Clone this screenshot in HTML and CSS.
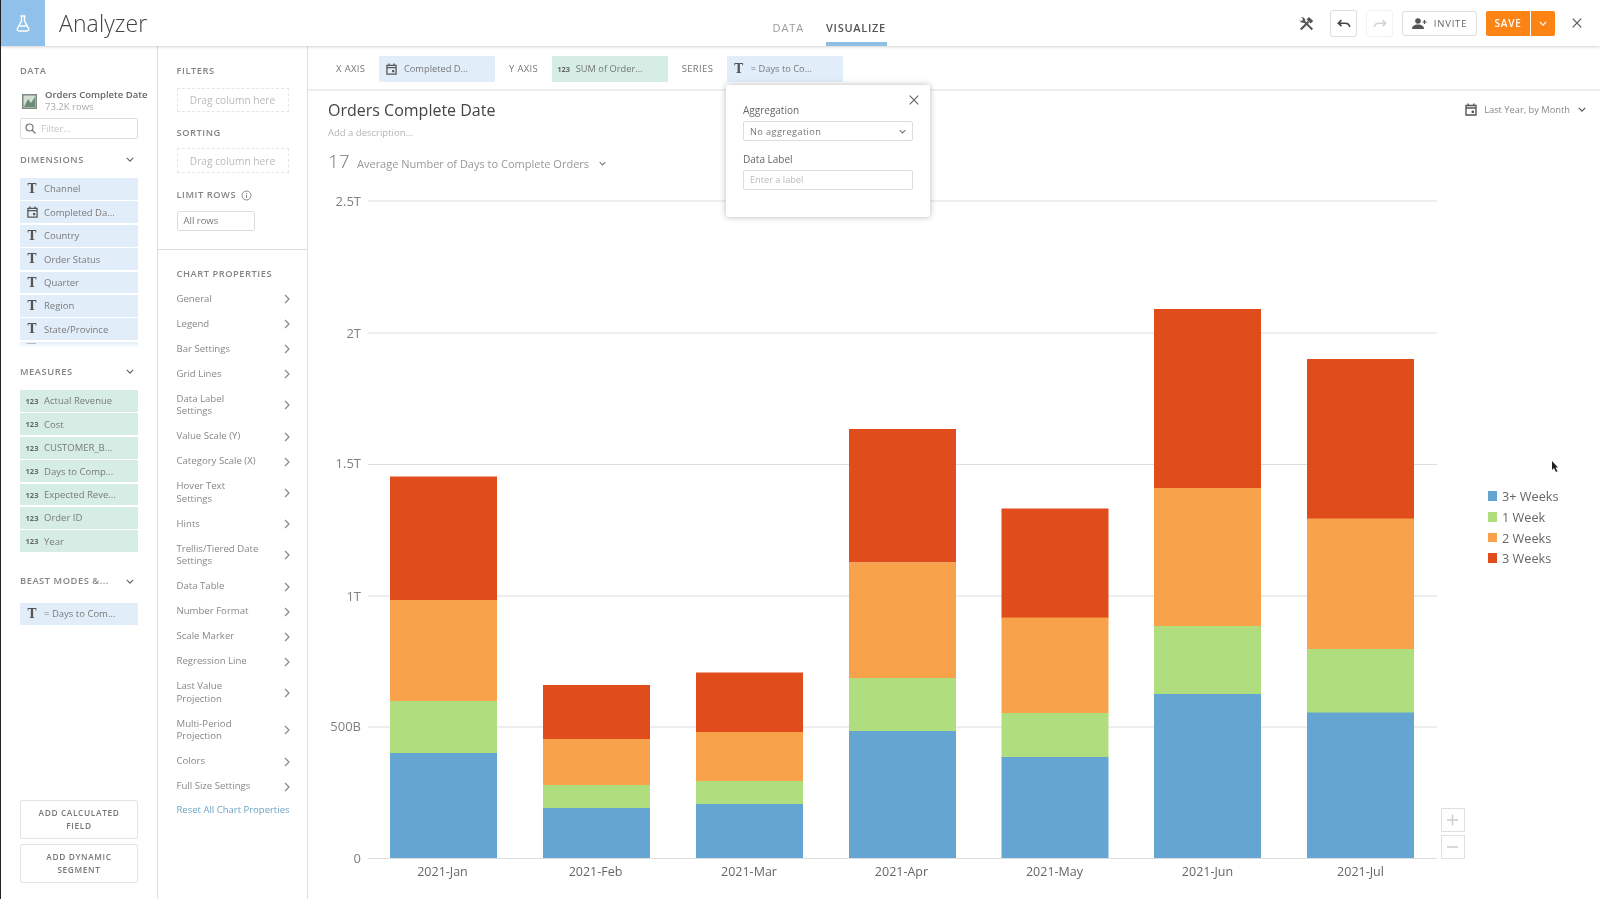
FILE: index.html
```html
<!DOCTYPE html>
<html lang="en">
<head>
<meta charset="utf-8">
<title>Analyzer</title>
<link rel="stylesheet" href="styles.css">
</head>
<body>
<svg class="defs" width="0" height="0" aria-hidden="true">
  <symbol id="cal" viewBox="0 0 12 13"><path d="M1 2.500h10v9.500H1zM1 5h10M3.200.5v2.500M8.800.5v2.500" fill="none" stroke="currentColor" stroke-width="1.400"/><rect x="6.600" y="7.600" width="2.400" height="2.400" fill="currentColor"/></symbol>
  <symbol id="chev" viewBox="0 0 10 6"><path d="M1 1l4 4 4-4" fill="none" stroke="currentColor" stroke-width="1.500"/></symbol>
  <symbol id="right" viewBox="0 0 6 10"><path d="M1 1l4 4-4 4" fill="none" stroke="currentColor" stroke-width="1.200"/></symbol>
  <symbol id="close" viewBox="0 0 10 10"><path d="M.7.7l8.600 8.600M9.300.7L.7 9.300" fill="none" stroke="currentColor" stroke-width="1.200"/></symbol>
</svg>
<div class="app">
  <header class="topbar">
    <div class="logo">
      <svg width="14" height="17" viewBox="0 0 14 17"><path d="M4.500 1h5M5.500 1v5L1.400 13.500c-.6 1.200.2 2.500 1.500 2.500h8.200c1.300 0 2.100-1.300 1.500-2.500L8.500 6V1M3.500 11h7" fill="none" stroke="#fff" stroke-width="1.500"/></svg>
    </div>
    <h1 class="app-title">Analyzer</h1>
    <nav class="tabs">
      <span class="tab">DATA</span>
      <span class="tab tab-active">VISUALIZE</span>
    </nav>
    <div class="actions">
      <svg class="tools" width="15" height="15" viewBox="0 0 15 15"><path d="M1.800 13.500L9.500 5.800" fill="none" stroke="#555" stroke-width="2.200"/><path d="M7.500 3.500L10 1l4.200 4-2.500 2.500z" fill="#555"/><path d="M13.300 13.500L5.200 5.400" fill="none" stroke="#555" stroke-width="2"/><path d="M6 6C7 3.500 5 .5 2.200 1.300L4 3.200 3.200 4.800 1.400 5 .6 3C.2 5.800 3.200 7.500 5.500 6.500z" fill="#555"/></svg>
      <button class="icon-btn"><svg width="14" height="9" viewBox="0 0 14 9"><path d="M4.500 1L1.300 4.200l3.200 3M1.500 4.200H8c2.600 0 4.300 1.200 4.800 3.800" fill="none" stroke="#444" stroke-width="1.600"/></svg></button>
      <button class="icon-btn icon-btn-off"><svg width="14" height="9" viewBox="0 0 14 9"><path d="M9.500 1l3.200 3.200-3.200 3M12.500 4.200H6C3.400 4.200 1.700 5.400 1.200 8" fill="none" stroke="#d4d4d4" stroke-width="1.600"/></svg></button>
      <button class="invite"><svg width="15" height="11" viewBox="0 0 15 11"><circle cx="6" cy="3" r="2.800" fill="#555"/><path d="M0 11c0-3 2.500-4.500 6-4.500s6 1.500 6 4.500z" fill="#555"/><path d="M12.500 2v4M10.500 4h4" stroke="#555" stroke-width="1.200"/></svg>INVITE</button>
      <div class="save-group">
        <button class="save">SAVE</button>
        <button class="save-more"><svg width="8" height="5"><use href="#chev"/></svg></button>
      </div>
      <svg class="close-top" width="10" height="10"><use href="#close"/></svg>
    </div>
  </header>

  <div class="workspace">
    <aside class="panel data-panel">
      <div class="label nudge">DATA</div>
      <div class="source">
        <svg class="source-icon" width="15" height="15" viewBox="0 0 15 15"><rect width="15" height="15" fill="#7c8a82"/><rect x="1.500" y="1.500" width="12" height="12" fill="#cfe0d2"/><path d="M2 13l4-8 3 4 4-6v10z" fill="#6d8c78"/></svg>
        <div class="source-text">
          <div class="source-name">Orders Complete Date</div>
          <div class="source-rows">73.2K rows</div>
        </div>
      </div>
      <div class="filter-input">
        <svg width="11" height="11" viewBox="0 0 11 11"><circle cx="4.500" cy="4.500" r="3.500" fill="none" stroke="#777" stroke-width="1.200"/><path d="M7 7l3.500 3.500" stroke="#777" stroke-width="1.300"/></svg>
        <span>Filter...</span>
      </div>

      <div class="section-head dims"><span class="label nudge">DIMENSIONS</span><svg width="8" height="5"><use href="#chev"/></svg></div>
      <div class="chips chips-clipped">
        <div class="chip blue"><b class="t">T</b>Channel</div>
        <div class="chip blue"><svg class="cal" width="11" height="12"><use href="#cal"/></svg>Completed Da...</div>
        <div class="chip blue"><b class="t">T</b>Country</div>
        <div class="chip blue"><b class="t">T</b>Order Status</div>
        <div class="chip blue"><b class="t">T</b>Quarter</div>
        <div class="chip blue"><b class="t">T</b>Region</div>
        <div class="chip blue"><b class="t">T</b>State/Province</div>
        <div class="chip-peek"><span class="peek-mark"></span></div>
      </div>

      <div class="section-head measures"><span class="label nudge">MEASURES</span><svg width="8" height="5"><use href="#chev"/></svg></div>
      <div class="chips">
        <div class="chip green"><b class="n">123</b>Actual Revenue</div>
        <div class="chip green"><b class="n">123</b>Cost</div>
        <div class="chip green"><b class="n">123</b>CUSTOMER_B...</div>
        <div class="chip green"><b class="n">123</b>Days to Comp...</div>
        <div class="chip green"><b class="n">123</b>Expected Reve...</div>
        <div class="chip green"><b class="n">123</b>Order ID</div>
        <div class="chip green"><b class="n">123</b>Year</div>
      </div>

      <div class="section-head beast"><span class="label">BEAST MODES &amp;...</span><svg width="8" height="5"><use href="#chev"/></svg></div>
      <div class="chips">
        <div class="chip blue"><b class="t">T</b>= Days to Com...</div>
      </div>

      <div class="add-buttons">
        <button class="add">ADD CALCULATED FIELD</button>
        <button class="add">ADD DYNAMIC SEGMENT</button>
      </div>
    </aside>

    <aside class="panel props-panel">
      <div class="props-top">
        <div class="label nudge">FILTERS</div>
        <div class="drop drop-a">Drag column here</div>
        <div class="label sort-label">SORTING</div>
        <div class="drop drop-b">Drag column here</div>
        <div class="label limit-label nudge">LIMIT ROWS
          <svg width="11" height="11" viewBox="0 0 11 11"><circle cx="5.500" cy="5.500" r="4.500" fill="none" stroke="#888"/><path d="M5.500 5v3M5.500 3v1" stroke="#888"/></svg>
        </div>
        <div class="limit-input">All rows</div>
      </div>
      <div class="props-list">
        <div class="label">CHART PROPERTIES</div>
        <ul class="prop-items">
          <li>General<svg width="6" height="10"><use href="#right"/></svg></li>
          <li>Legend<svg width="6" height="10"><use href="#right"/></svg></li>
          <li>Bar Settings<svg width="6" height="10"><use href="#right"/></svg></li>
          <li>Grid Lines<svg width="6" height="10"><use href="#right"/></svg></li>
          <li class="two"><span>Data Label<br>Settings</span><svg width="6" height="10"><use href="#right"/></svg></li>
          <li>Value Scale (Y)<svg width="6" height="10"><use href="#right"/></svg></li>
          <li>Category Scale (X)<svg width="6" height="10"><use href="#right"/></svg></li>
          <li class="two"><span>Hover Text<br>Settings</span><svg width="6" height="10"><use href="#right"/></svg></li>
          <li>Hints<svg width="6" height="10"><use href="#right"/></svg></li>
          <li class="two"><span>Trellis/Tiered Date<br>Settings</span><svg width="6" height="10"><use href="#right"/></svg></li>
          <li>Data Table<svg width="6" height="10"><use href="#right"/></svg></li>
          <li>Number Format<svg width="6" height="10"><use href="#right"/></svg></li>
          <li>Scale Marker<svg width="6" height="10"><use href="#right"/></svg></li>
          <li>Regression Line<svg width="6" height="10"><use href="#right"/></svg></li>
          <li class="two"><span>Last Value<br>Projection</span><svg width="6" height="10"><use href="#right"/></svg></li>
          <li class="two"><span>Multi-Period<br>Projection</span><svg width="6" height="10"><use href="#right"/></svg></li>
          <li>Colors<svg width="6" height="10"><use href="#right"/></svg></li>
          <li>Full Size Settings<svg width="6" height="10"><use href="#right"/></svg></li>
        </ul>
        <div class="reset">Reset All Chart Properties</div>
      </div>
    </aside>

    <main class="main">
      <div class="axis-bar">
        <span class="axis-label x-label">X AXIS</span>
        <div class="axis-chip blue"><svg class="cal" width="11" height="12"><use href="#cal"/></svg>Completed D...</div>
        <span class="axis-label">Y AXIS</span>
        <div class="axis-chip green"><b class="n">123</b>SUM of Order...</div>
        <span class="axis-label">SERIES</span>
        <div class="axis-chip blue"><b class="t">T</b>= Days to Co...</div>
      </div>

      <div class="chart-head">
        <div class="chart-titles">
          <h2 class="chart-title">Orders Complete Date</h2>
          <div class="chart-desc">Add a description...</div>
          <div class="summary"><span class="summary-num">17</span><span class="summary-text">Average Number of Days to Complete Orders</span><svg width="7" height="5"><use href="#chev"/></svg></div>
        </div>
        <div class="date-range"><svg class="cal" width="12" height="13"><use href="#cal"/></svg>Last Year, by Month<svg class="date-chev" width="8" height="5"><use href="#chev"/></svg></div>
      </div>

      <svg class="chart" viewBox="308 185 1292 714" width="1292" height="714">
        <g class="grid">
          <line x1="368" x2="1437" y1="201" y2="201"/>
          <line x1="368" x2="1437" y1="333" y2="333"/>
          <line x1="368" x2="1437" y1="464.500" y2="464.500"/>
          <line x1="368" x2="1437" y1="596" y2="596"/>
          <line x1="368" x2="1437" y1="727" y2="727"/>
          <line x1="368" x2="1437" y1="858.500" y2="858.500"/>
        </g>
        <g class="y-ticks">
          <text x="361" y="205.500">2.5T</text>
          <text x="361" y="337.500">2T</text>
          <text x="361" y="468">1.5T</text>
          <text x="361" y="600.500">1T</text>
          <text x="361" y="731">500B</text>
          <text x="361" y="863">0</text>
        </g>
        <g>
          <rect class="s4" x="390" width="107" y="476.500" height="124"/><rect class="s3" x="390" width="107" y="600" height="101.500"/><rect class="s2" x="390" width="107" y="701" height="52.500"/><rect class="s1" x="390" width="107" y="753" height="105"/>
          <rect class="s4" x="543" width="107" y="685" height="54.500"/><rect class="s3" x="543" width="107" y="739" height="46.500"/><rect class="s2" x="543" width="107" y="785" height="23.500"/><rect class="s1" x="543" width="107" y="808" height="50"/>
          <rect class="s4" x="696" width="107" y="672.500" height="60"/><rect class="s3" x="696" width="107" y="732" height="49.500"/><rect class="s2" x="696" width="107" y="781" height="23.500"/><rect class="s1" x="696" width="107" y="804" height="54"/>
          <rect class="s4" x="849" width="107" y="429" height="133.500"/><rect class="s3" x="849" width="107" y="562.500" height="116"/><rect class="s2" x="849" width="107" y="678" height="53.500"/><rect class="s1" x="849" width="107" y="731" height="127"/>
          <rect class="s4" x="1001.500" width="107" y="508.500" height="109.500"/><rect class="s3" x="1001.500" width="107" y="617.500" height="96"/><rect class="s2" x="1001.500" width="107" y="713" height="44.500"/><rect class="s1" x="1001.500" width="107" y="757" height="101"/>
          <rect class="s4" x="1154" width="107" y="309" height="179.500"/><rect class="s3" x="1154" width="107" y="488" height="138.500"/><rect class="s2" x="1154" width="107" y="626" height="68.500"/><rect class="s1" x="1154" width="107" y="694" height="164"/>
          <rect class="s4" x="1307" width="107" y="359" height="160"/><rect class="s3" x="1307" width="107" y="518.500" height="131"/><rect class="s2" x="1307" width="107" y="649" height="64"/><rect class="s1" x="1307" width="107" y="712.500" height="145.500"/>
        </g>
        <g class="x-ticks">
          <text x="442.500" y="876">2021-Jan</text>
          <text x="595.500" y="876">2021-Feb</text>
          <text x="749" y="876">2021-Mar</text>
          <text x="901.500" y="876">2021-Apr</text>
          <text x="1054.500" y="876">2021-May</text>
          <text x="1207.500" y="876">2021-Jun</text>
          <text x="1360.500" y="876">2021-Jul</text>
        </g>
        <g class="legend">
          <rect class="s1" x="1488" y="491" width="9" height="10"/><text x="1502" y="501">3+ Weeks</text>
          <rect class="s2" x="1488" y="512" width="9" height="10"/><text x="1502" y="522">1 Week</text>
          <rect class="s3" x="1488" y="533" width="9" height="9"/><text x="1502" y="542.500">2 Weeks</text>
          <rect class="s4" x="1488" y="553" width="9" height="10"/><text x="1502" y="563">3 Weeks</text>
        </g>
        <g class="zoom">
          <rect x="1441.500" y="808.500" width="23" height="23"/><path d="M1447 820h11M1452.500 814.500v11"/>
          <rect x="1441.500" y="835.500" width="23" height="23"/><path d="M1447 847h11"/>
        </g>
      </svg>

      <div class="popover">
        <svg class="popover-close" width="10" height="10"><use href="#close"/></svg>
        <div class="pop-label">Aggregation</div>
        <div class="pop-field pop-select">No aggregation<svg width="7" height="5"><use href="#chev"/></svg></div>
        <div class="pop-label pop-label-2">Data Label</div>
        <div class="pop-field pop-input">Enter a label</div>
      </div>
    </main>
  </div>
  <svg class="cursor" width="8" height="12" viewBox="0 0 8 12"><path d="M1 0v9l2-2 2 4 1.500-.7-2-3.800H7z" fill="#222"/></svg>
</div>
</body>
</html>
```

FILE: styles.css
```css
* { box-sizing: border-box; }
html, body { margin: 0; height: 100%; overflow: hidden; background: #fff; }
body { font-family: "Open Sans", "Liberation Sans", sans-serif; color: #777; }
.defs { position: absolute; }
button { font-family: inherit; cursor: pointer; }

.app { position: relative; width: 1600px; height: 899px; border-left: 1.5px solid #222; display: flex; flex-direction: column; background: #fff; filter: blur(.5px); }

.topbar { position: relative; z-index: 2; height: 46px; flex: none; display: flex; align-items: center; background: #fff; box-shadow: 0 1px 3px rgba(0, 0, 0, .18); }
.logo { width: 44px; height: 46px; background: #8fc1ea; display: flex; align-items: center; justify-content: center; }
.app-title { margin: 0 0 0 14px; font-size: 23px; font-weight: 300; color: #444; letter-spacing: .1px; width: 713.500px; }
.tabs { display: flex; gap: 22px; height: 46px; align-items: center; font-size: 11px; letter-spacing: .9px; padding-top: 10px; }
.tab { color: #999; height: 36px; line-height: 20px; padding-top: 8px; }
.tab-active { color: #555; font-weight: 600; border-bottom: 4px solid #8fbfe3; width: 61px; white-space: nowrap; letter-spacing: .7px; }
.actions { margin-left: auto; display: flex; align-items: center; }
.tools { margin-right: 16px; }
.icon-btn { width: 27px; height: 27px; border: 1px solid #ddd; border-radius: 3px; background: #fff; padding: 0; margin-right: 9px; display: flex; align-items: center; justify-content: center; }
.icon-btn-off { border-color: #f2f2f2; }
.invite { width: 75px; height: 25px; border: 1px solid #ddd; border-radius: 3px; background: #fff; color: #666; font-size: 9.500px; letter-spacing: .8px; display: flex; align-items: center; justify-content: center; gap: 7px; padding: 0; margin-right: 9px; }
.save-group { display: flex; gap: 1px; }
.save, .save-more { height: 25px; border: 0; background: #fb8414; color: #fff; padding: 0; border-radius: 2px 0 0 2px; }
.save { width: 44px; font-size: 10px; font-weight: 600; letter-spacing: .8px; }
.save-more { width: 24px; border-radius: 0 2px 2px 0; display: flex; align-items: center; justify-content: center; }
.close-top { margin: 0 18px 0 17px; color: #555; }

.workspace { flex: 1; display: flex; min-height: 0; }
.panel { flex: none; border-right: 1px solid #dedede; display: flex; flex-direction: column; }
.label { font-size: 9.300px; line-height: 14px; font-weight: 600; letter-spacing: .55px; color: #858585; white-space: nowrap; }
.label.nudge { padding-top: 1px; margin-bottom: -1px; }

.data-panel { width: 157px; padding: 17px 0 16px 19px; }
.data-panel > *, .chips, .section-head { width: 118px; }
.source { display: flex; align-items: center; margin-top: 12px; gap: 8px; height: 25px; padding-left: 2px; }
.source-icon { flex: none; }
.source-text { flex: none; white-space: nowrap; }
.source-name { font-size: 9.500px; line-height: 12px; font-weight: 600; color: #666; }
.source-rows { font-size: 9.500px; line-height: 12.500px; color: #aaa; }
.filter-input { margin-top: 4px; height: 21px; border: 1px solid #ddd; border-radius: 2px; display: flex; align-items: center; gap: 5px; padding-left: 4px; font-size: 9.500px; color: #c4c4c4; }
.section-head { display: flex; align-items: center; justify-content: space-between; padding-right: 4px; color: #666; height: 14px; }
.dims { margin-top: 13px; }
.measures { margin-top: 17px; }
.beast { margin-top: 22px; }
.chips { display: flex; flex-direction: column; gap: 1.500px; margin-top: 12px; }
.beast + .chips { margin-top: 14.500px; }
.chips-clipped { height: 169px; overflow: hidden; }
.chip { flex: none; height: 21.900px; display: flex; align-items: center; font-size: 9.500px; color: #7a7a7a; white-space: nowrap; }
.chip-peek { flex: none; height: 6px; padding: 1px 0 0 7px; background: linear-gradient(#e1eefa, #fff); }
.peek-mark { display: block; width: 9px; height: 1px; background: #bbb; }
.chip.blue, .axis-chip.blue { background: #e1eefa; }
.chip.green, .axis-chip.green { background: #d5ede5; }
.t { flex: none; width: 24px; text-align: center; font-family: "DejaVu Serif", "Liberation Serif", serif; font-size: 12px; font-weight: 700; color: #555; }
.n { flex: none; width: 24px; text-align: center; font-size: 7.500px; font-weight: 700; color: #666; }
.cal { flex: none; color: #555; }
.chip .cal { margin: 0 6.500px; }
.add-buttons { margin-top: auto; display: flex; flex-direction: column; gap: 5px; }
.add { height: 39px; border: 1px solid #e4e4e4; border-radius: 2px; background: #fff; color: #777; font-size: 8.300px; line-height: 12.500px; font-weight: 600; letter-spacing: .65px; padding: 0 10px; }

.props-panel { width: 150px; }
.props-top { padding: 17px 18.500px 19px; border-bottom: 1px solid #dedede; height: 204px; }
.drop { width: 112px; border: 1px dashed #e6e6e6; font-size: 10.200px; color: #bbb; display: flex; align-items: center; justify-content: center; }
.drop-a { margin-top: 11px; height: 24px; }
.drop-b { margin-top: 8.500px; height: 25px; }
.sort-label { margin-top: 13.500px; }
.limit-label { margin-top: 14px; display: flex; align-items: center; gap: 5px; }
.limit-input { margin-top: 10px; width: 78px; height: 20px; border: 1px solid #ddd; border-radius: 2px; font-size: 9.500px; color: #777; line-height: 18px; padding-left: 6px; }
.props-list { padding: 16.500px 18.500px 0; }
.prop-items { list-style: none; margin: 6px -1px 0 0; padding: 0; }
.prop-items li { height: 25px; display: flex; align-items: center; justify-content: space-between; font-size: 9.600px; line-height: 12.500px; color: #888; }
.prop-items li.two { height: 37.500px; }
.reset { margin-top: 4px; font-size: 9.500px; line-height: 13px; color: #6fa3c3; white-space: nowrap; }

.main { position: relative; flex: 1; min-width: 0; display: flex; flex-direction: column; }
.axis-bar { height: 45px; flex: none; border-bottom: 2px solid #eee; display: flex; align-items: flex-start; padding: 10px 0 0 28px; }
.axis-label { font-size: 9.500px; line-height: 25px; letter-spacing: .35px; color: #777; margin-left: 14px; margin-right: 13.500px; }
.x-label { margin-left: 0; }
.axis-chip { width: 116px; height: 25.500px; display: flex; align-items: center; font-size: 9.300px; color: #777; white-space: nowrap; border-radius: 1px; }
.axis-chip .cal { margin: 0 7px; }

.chart-head { height: 94px; flex: none; display: flex; justify-content: space-between; padding: 7px 14px 0 20px; }
.chart-title { margin: 0; font-size: 16px; line-height: 24px; font-weight: 500; color: #444; white-space: nowrap; }
.chart-desc { font-size: 9.500px; line-height: 13px; margin-top: 4px; color: #b5b5b5; }
.summary { display: flex; align-items: center; margin-top: 11px; height: 26px; }
.summary-num { font-size: 19px; font-weight: 300; color: #777; width: 29px; margin-top: -4px; }
.summary-text { font-size: 11px; color: #999; margin-right: 10px; }
.date-range { display: flex; align-items: center; font-size: 9.300px; color: #888; height: 22px; gap: 7px; }
.date-chev { color: #555; margin-left: 1px; }

.chart { display: block; flex: none; }
.grid line { stroke: #dedede; stroke-width: 1.200; }
.y-ticks text { font-size: 13px; fill: #808080; text-anchor: end; }
.x-ticks text { font-size: 12.500px; fill: #666; text-anchor: middle; }
.legend text { font-size: 12.700px; fill: #666; }
.s1 { fill: #65a5d2; }
.s2 { fill: #b0de7e; }
.s3 { fill: #f8a24c; }
.s4 { fill: #e04c1b; }
.zoom rect { fill: #fff; stroke: #e0e0e0; }
.zoom path { fill: none; stroke: #ccc; stroke-width: 1.500; }

.popover { position: absolute; z-index: 3; left: 418px; top: 39px; width: 204px; height: 132px; background: #fff; box-shadow: 0 0 6px rgba(0, 0, 0, .28); border-radius: 2px; padding: 18px 17px 0; }
.popover-close { position: absolute; top: 10px; right: 11px; color: #666; }
.pop-label { font-size: 10px; line-height: 14px; color: #666; }
.pop-label-2 { margin-top: 11px; }
.pop-field { margin-top: 4px; height: 20px; border: 1px solid #ddd; border-radius: 2px; display: flex; align-items: center; justify-content: space-between; padding: 0 6px; font-size: 9.200px; }
.pop-select { color: #777; letter-spacing: .4px; }
.pop-input { color: #bbb; margin-top: 3.500px; }

.cursor { position: absolute; z-index: 4; left: 1550px; top: 461px; }
```
